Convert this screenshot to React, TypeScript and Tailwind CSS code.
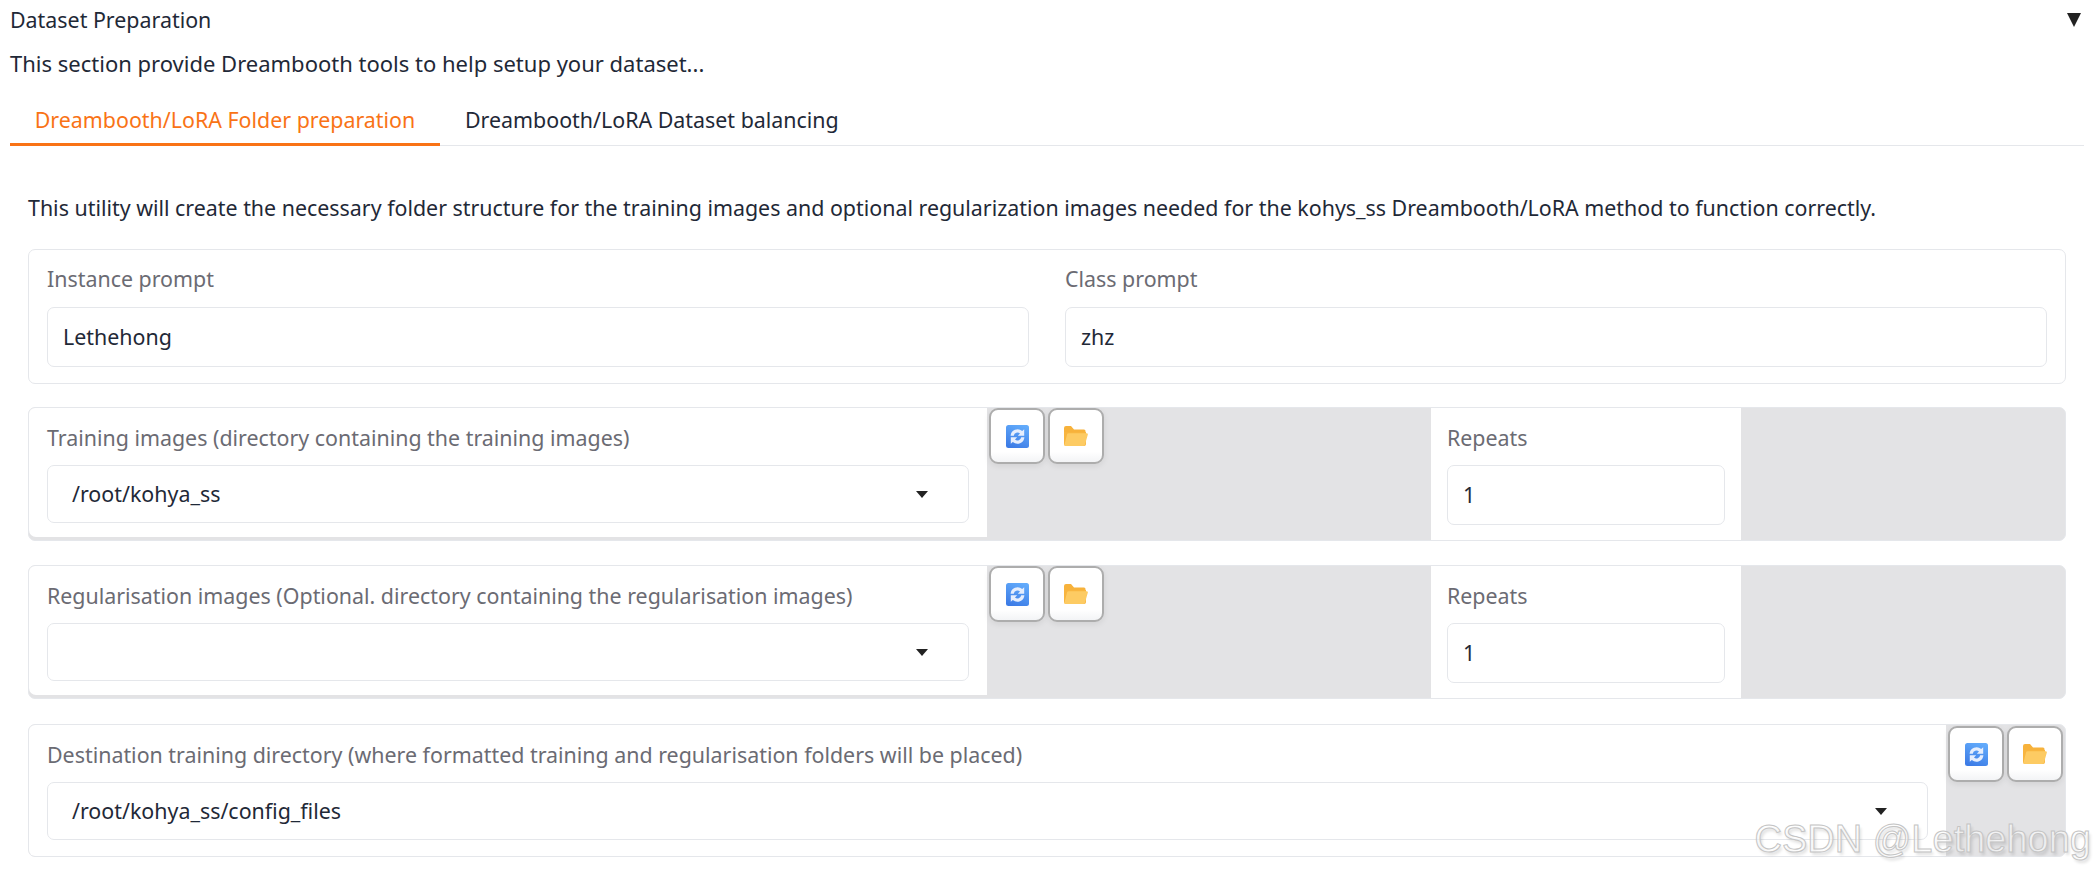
const font = "font-['Noto_Sans','Open_Sans',sans-serif]";

function RefreshIcon() {
  return (
    <svg width={23} height={23} viewBox="0 0 23 23">
      <defs>
        <linearGradient id="blueFill" x1="0.7" y1="0" x2="0.3" y2="1">
          <stop offset="0" stopColor="#62abfb" />
          <stop offset="1" stopColor="#3d7ce6" />
        </linearGradient>
      </defs>
      <rect x="0" y="0" width="23" height="23" rx="2.5" fill="url(#blueFill)" />
      <path
        d="M4.6 10.8 A7 7 0 0 1 16.2 6 L18.2 4.2 V10.8 H11.8 L14 8.6 A3.7 3.7 0 0 0 7.8 10.8 Z"
        fill="#e6eefd"
      />
      <path
        d="M18.4 12.2 A7 7 0 0 1 6.8 17 L4.8 18.8 V12.2 H11.2 L9 14.4 A3.7 3.7 0 0 0 15.2 12.2 Z"
        fill="#e6eefd"
      />
    </svg>
  );
}

function FolderIcon() {
  return (
    <svg width={24} height={20} viewBox="0 0 24 20">
      <path d="M0 2 Q0 0 2 0 H7 L10 3.5 H20 Q21.5 3.5 21.5 5 V8 H0 Z" fill="#f7b23b" />
      <path d="M0 6 H22 V18 Q22 20 20 20 H2 Q0 20 0 18 Z" fill="#f8b53f" />
      <path d="M4.6 7.2 H22.6 Q24.2 7.2 23.8 8.8 L21 18.4 Q20.6 20 19 20 H1.5 Q0.2 20 0.5 18.6 L3 8.6 Q3.3 7.2 4.6 7.2 Z" fill="#fdcb63" />
    </svg>
  );
}

function ToolButton({ children }: { children: React.ReactNode }) {
  return (
    <button
      type="button"
      className="flex h-[56px] w-[56px] items-center justify-center rounded-[9px] border-2 border-[#adadad] bg-gradient-to-b from-white from-80% to-[#f3f4f6] shadow-[0_2px_6px_rgba(0,0,0,0.08)]"
    >
      {children}
    </button>
  );
}

function Label({ children }: { children: React.ReactNode }) {
  return <div className="text-[21.4px] leading-[26px] text-[#6b6b73]">{children}</div>;
}

function TextBox({ value, className }: { value: string; className?: string }) {
  return (
    <div className={`flex items-center rounded-[7px] border border-[#e5e7eb] bg-white px-[15px] text-[21.4px] text-[#1f2937] ${className ?? ""}`}>
      {value}
    </div>
  );
}

function SelectBox({ value }: { value: string }) {
  return (
    <div className="mt-[14px] flex h-[58px] items-center justify-between rounded-[7px] border border-[#e5e7eb] bg-white pl-[24px] pr-[40px] text-[21.4px] text-[#1f2937]">
      <span>{value}</span>
      <span className="h-0 w-0 border-x-[6px] border-t-[7px] border-x-transparent border-t-[#222]" />
    </div>
  );
}

function FolderRow({ label, value }: { label: string; value: string }) {
  return (
    <div className="flex h-[134px] overflow-hidden rounded-[7px] border border-[#e5e7eb] bg-[#e3e3e5]">
      <div className="h-[129px] w-[958px] rounded-bl-[7px] bg-white px-[18px] pt-[17px]">
        <Label>{label}</Label>
        <SelectBox value={value} />
      </div>
      <div className="flex gap-[3px] pl-[2px]">
        <ToolButton>
          <RefreshIcon />
        </ToolButton>
        <ToolButton>
          <FolderIcon />
        </ToolButton>
      </div>
      <div className="ml-[327px] h-full w-[310px] bg-white px-[16px] pt-[17px]">
        <Label>Repeats</Label>
        <TextBox value="1" className="mt-[14px] h-[60px]" />
      </div>
    </div>
  );
}

export default function App() {
  return (
    <div className={`relative h-[873px] w-[2094px] overflow-hidden bg-white ${font}`}>
      <div className="flex items-center justify-between pl-[10px] pr-[13px] pt-[6px] text-[21.4px] leading-[28px] text-[#1f2937]">
        <span>Dataset Preparation</span>
        <span className="h-0 w-0 border-x-[7px] border-t-[14px] border-x-transparent border-t-[#222]" />
      </div>
      <p className="mt-[15px] pl-[10px] text-[22px] leading-[28px] text-[#1f2937]">
        This section provide Dreambooth tools to help setup your dataset...
      </p>
      <div className="ml-[10px] mr-[10px] mt-[15px] flex h-[54px] border-b border-[#e5e7eb] text-[21.4px] leading-[28px]">
        <div className="flex h-[54px] w-[430px] items-start justify-center border-b-[3px] border-[#f97316] pt-[14px] text-[#f97316]">
          Dreambooth/LoRA Folder preparation
        </div>
        <div className="pl-[25px] pt-[14px] text-[#1f2937]">Dreambooth/LoRA Dataset balancing</div>
      </div>
      <p className="ml-[28px] mt-[48px] text-[21.4px] leading-[28px] text-[#1f2937]">
        This utility will create the necessary folder structure for the training images and optional regularization images needed for the kohys_ss Dreambooth/LoRA method to function correctly.
      </p>

      <div className="ml-[28px] mt-[27px] w-[2038px]">
        <div className="grid h-[135px] grid-cols-2 gap-x-[36px] rounded-[7px] border border-[#e5e7eb] bg-white px-[18px] pt-[16px]">
          <div>
            <Label>Instance prompt</Label>
            <TextBox value="Lethehong" className="mt-[15px] h-[60px]" />
          </div>
          <div>
            <Label>Class prompt</Label>
            <TextBox value="zhz" className="mt-[15px] h-[60px]" />
          </div>
        </div>

        <div className="mt-[23px]">
          <FolderRow label="Training images (directory containing the training images)" value="/root/kohya_ss" />
        </div>
        <div className="mt-[24px]">
          <FolderRow label="Regularisation images (Optional. directory containing the regularisation images)" value="" />
        </div>

        <div className="mt-[25px] flex h-[133px] overflow-hidden rounded-[7px] border border-[#e5e7eb] bg-[#e3e3e5]">
          <div className="h-full w-[1917px] bg-white px-[18px] pt-[17px]">
            <Label>Destination training directory (where formatted training and regularisation folders will be placed)</Label>
            <SelectBox value="/root/kohya_ss/config_files" />
          </div>
          <div className="flex gap-[3px] pl-[2px] pt-[1px]">
            <ToolButton>
              <RefreshIcon />
            </ToolButton>
            <ToolButton>
              <FolderIcon />
            </ToolButton>
          </div>
        </div>
      </div>

      {/* CSDN watermark */}
      <div className="absolute bottom-[10px] right-[3px] font-['Liberation_Sans',sans-serif] text-[38px] leading-[48px] text-white/60 [-webkit-text-stroke:1px_#c4c4c4] [text-shadow:2px_3px_3px_rgba(0,0,0,0.12)]">
        CSDN @Lethehong
      </div>
    </div>
  );
}
